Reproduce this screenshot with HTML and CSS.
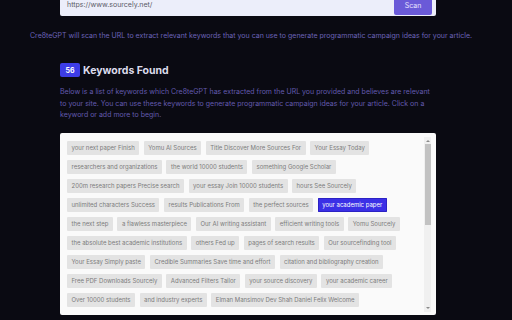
FILE: index.html
```html
<!DOCTYPE html>
<html lang="en">
<head>
    <meta charset="UTF-8">
    <title>Cre8teGPT keywords</title>
    <link rel="stylesheet" href="styles.css">
</head>
<body>

<div class="page">
    <div class="url-bar">
        <span class="url">https://www.sourcely.net/</span>
        <button class="scan">Scan</button>
    </div>

    <p class="hint">Cre8teGPT will scan the URL to extract relevant keywords that you can use to generate programmatic campaign ideas for your article.</p>

    <section class="results">
        <h2 class="results-title"><span class="count">56</span>Keywords Found</h2>
        <p class="results-desc">Below is a list of keywords which Cre8teGPT has extracted from the URL you provided and believes are relevant to your site. You can use these keywords to generate programmatic campaign ideas for your article. Click on a keyword or add more to begin.</p>

        <div class="keyword-box">
            <div class="keyword-list">
                <span class="tag">your next paper Finish</span>
                <span class="tag">Yomu AI Sources</span>
                <span class="tag">Title Discover More Sources For</span>
                <span class="tag">Your Essay Today</span>
                <span class="tag">researchers and organizations</span>
                <span class="tag">the world 10000 students</span>
                <span class="tag">something Google Scholar</span>
                <span class="tag">200m research papers Precise search</span>
                <span class="tag">your essay Join 10000 students</span>
                <span class="tag">hours See Sourcely</span>
                <span class="tag">unlimited characters Success</span>
                <span class="tag">results Publications From</span>
                <span class="tag">the perfect sources</span>
                <span class="tag selected">your academic paper</span>
                <span class="tag">the next step</span>
                <span class="tag">a flawless masterpiece</span>
                <span class="tag">Our AI writing assistant</span>
                <span class="tag">efficient writing tools</span>
                <span class="tag">Yomu Sourcely</span>
                <span class="tag">the absolute best academic institutions</span>
                <span class="tag">others Fed up</span>
                <span class="tag">pages of search results</span>
                <span class="tag">Our sourcefinding tool</span>
                <span class="tag">Your Essay Simply paste</span>
                <span class="tag">Credible Summaries Save time and effort</span>
                <span class="tag">citation and bibliography creation</span>
                <span class="tag">Free PDF Downloads Sourcely</span>
                <span class="tag">Advanced Filters Tailor</span>
                <span class="tag">your source discovery</span>
                <span class="tag">your academic career</span>
                <span class="tag">Over 10000 students</span>
                <span class="tag">and industry experts</span>
                <span class="tag">Elman Mansimov Dev Shah Daniel Felix Welcome</span>
                <span class="tag">Sourcely Pricing Plans</span>
                <span class="tag">the right sources</span>
                <span class="tag">credible academic sources</span>
                <span class="tag">AI research assistant</span>
                <span class="tag">your research process</span>
                <span class="tag">Try Sourcely Free</span>
                <span class="tag">reliable citations</span>
                <span class="tag">student testimonials</span>
                <span class="tag">Find sources in seconds</span>
                <span class="tag">literature review help</span>
                <span class="tag">Export to BibTeX</span>
                <span class="tag">peer reviewed journals</span>
                <span class="tag">Sourcely Blog</span>
                <span class="tag">the best sources for your essay</span>
                <span class="tag">academic writing</span>
                <span class="tag">Join the community</span>
                <span class="tag">search by keyword</span>
                <span class="tag">Frequently Asked Questions</span>
                <span class="tag">Contact Sourcely</span>
                <span class="tag">Terms of Service</span>
                <span class="tag">Privacy Policy</span>
                <span class="tag">essay source finder</span>
                <span class="tag">thesis research</span>
            </div>
            <div class="scrollbar">
                <span class="arrow up"></span>
                <span class="thumb"></span>
                <span class="arrow down"></span>
            </div>
        </div>
    </section>
</div>

</body>
</html>
```

FILE: styles.css
```css
body {
    margin: 0;
    background: #0a0a12;
    font-family: Inter, "Noto Sans", sans-serif;
    overflow: hidden;
}

.page {
    display: flex;
    flex-direction: column;
}

/* page is scrolled down a bit, the url bar is cut at the top */
.url-bar {
    display: flex;
    align-items: center;
    justify-content: space-between;
    box-sizing: border-box;
    width: 376px;
    height: 36px;
    margin: -20px 0 0 60px;
    padding: 0 4px 0 7px;
    background: #eceefa;
    border-radius: 2px;
}

.url {
    font-size: 7px;
    color: #5a5a66;
    margin-top: 13px;
}

.scan {
    width: 38px;
    height: 30px;
    margin-top: 4px;
    padding: 11px 0 0;
    border: none;
    border-radius: 2px;
    background: #6a5ad8;
    color: #e6e2ff;
    font-family: inherit;
    font-size: 7px;
}

.hint {
    margin: 15px 0 0 30px;
    font-size: 7px;
    line-height: 10px;
    color: #6b63b8;
}

.results {
    display: flex;
    flex-direction: column;
    width: 376px;
    margin: 22px 0 0 60px;
}

.results-title {
    display: flex;
    align-items: center;
    margin: 0;
    font-size: 10.5px;
    font-weight: 700;
    color: #dcdcec;
}

.count {
    display: flex;
    align-items: center;
    justify-content: center;
    width: 20px;
    height: 14px;
    margin-right: 3px;
    background: #3d3de6;
    border-radius: 2px;
    color: #fff;
    font-size: 7px;
}

.results-desc {
    margin: 9px 0 0;
    font-size: 7px;
    line-height: 11.5px;
    color: #635aae;
}

.keyword-box {
    display: flex;
    gap: 2px;
    margin-top: 12px;
    padding: 4px 5px 3px 7px;
    background: #fafafa;
    border-radius: 2px;
}

.keyword-list {
    flex: 1;
    display: flex;
    flex-wrap: wrap;
    align-content: flex-start;
    gap: 5px 4.5px;
    height: 171px;
    padding-top: 4px;
    overflow: hidden;
}

.tag {
    box-sizing: border-box;
    height: 14px;
    padding: 0 4.5px;
    line-height: 14px;
    font-size: 6px;
    color: #7c7c7c;
    background: #e3e3e3;
    border-radius: 1px;
    white-space: nowrap;
}

.tag.selected {
    background: #3b30e6;
    color: #fff;
    box-shadow: inset 0 0 0 1px #2c22c4;
}

.scrollbar {
    display: flex;
    flex-direction: column;
    align-items: center;
    width: 7px;
    height: 175px;
    background: #f0f0f0;
}

.thumb {
    width: 6px;
    height: 81px;
    margin: 2px 0 auto;
    background: #c2c2c2;
}

.arrow {
    width: 0;
    height: 0;
    margin-top: 3px;
    border-left: 2px solid transparent;
    border-right: 2px solid transparent;
}

.arrow.up {
    border-bottom: 2px solid #8a8a8a;
}

.arrow.down {
    margin: 0 0 3px;
    border-top: 2px solid #8a8a8a;
}
```
